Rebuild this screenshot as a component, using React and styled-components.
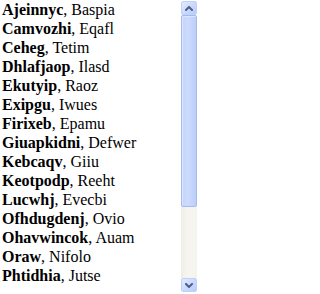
import React from "react";
import styled, { createGlobalStyle } from "styled-components";

const Global = createGlobalStyle`
  html, body { margin: 0; padding: 0; background: #fff; }
  body { font-family: "Liberation Serif", "Times New Roman", serif; }
`;

const Frame = styled.div`
  display: flex;
  width: 200px;
  height: 294px;
  background: #fff;
  overflow: hidden;
`;

const List = styled.ul`
  flex: 1;
  margin: 0;
  padding: 0 0 0 2px;
  list-style: none;
  font-family: "Liberation Serif", "Times New Roman", serif;
  font-size: 16px;
  line-height: 19px;
  color: #000;
`;

const Row = styled.li`
  white-space: nowrap;
  height: 19px;
`;

const Last = styled.b`
  font-weight: bold;
`;

const ScrollBar = styled.div`
  display: flex;
  flex-direction: column;
  width: 16px;
  margin: 1px 3px 2px 0;
`;

const ArrowButton = styled.div`
  height: 14px;
  flex: none;
  box-sizing: border-box;
  display: flex;
  align-items: center;
  justify-content: center;
  border: 1px solid #bfd0fa;
  border-radius: 2px;
  background: linear-gradient(135deg, #e2ebfe 0%, #c9d8fd 55%, #b7cbfa 100%);
`;

const Track = styled.div`
  flex: 1;
  display: flex;
  flex-direction: column;
  background: linear-gradient(to right, #eeede6, #f6f5f0 40%, #f4f3ee);
`;

const Thumb = styled.div`
  box-sizing: border-box;
  border: 1px solid #a5baee;
  border-radius: 2px;
  box-shadow: inset 1px 1px 0 #dce6fe;
  background: linear-gradient(to right, #c3d3fc, #cddafd 40%, #bccefa);
`;

const Chevron = ({ up }) => (
  <svg width="8" height="5" viewBox="0 0 8 5">
    <path
      d={up ? "M1 4 L4 1 L7 4" : "M1 1 L4 4 L7 1"}
      fill="none"
      stroke="#4d6185"
      strokeWidth="2"
      strokeLinecap="square"
    />
  </svg>
);

const people = [
  ["Ajeinnyc", "Baspia"],
  ["Camvozhi", "Eqafl"],
  ["Ceheg", "Tetim"],
  ["Dhlafjaop", "Ilasd"],
  ["Ekutyip", "Raoz"],
  ["Exipgu", "Iwues"],
  ["Firixeb", "Epamu"],
  ["Giuapkidni", "Defwer"],
  ["Kebcaqv", "Giiu"],
  ["Keotpodp", "Reeht"],
  ["Lucwhj", "Evecbi"],
  ["Ofhdugdenj", "Ovio"],
  ["Ohavwincok", "Auam"],
  ["Oraw", "Nifolo"],
  ["Phtidhia", "Jutse"],
];

export default function App() {
  return (
    <>
      <Global />
      <Frame>
        <List>
          {people.map(([last, first]) => (
            <Row key={last}>
              <Last>{last}</Last>, {first}
            </Row>
          ))}
        </List>
        <ScrollBar>
          <ArrowButton>
            <Chevron up />
          </ArrowButton>
          <Track>
            <Thumb style={{ height: 192 }} />
          </Track>
          <ArrowButton>
            <Chevron />
          </ArrowButton>
        </ScrollBar>
      </Frame>
    </>
  );
}
